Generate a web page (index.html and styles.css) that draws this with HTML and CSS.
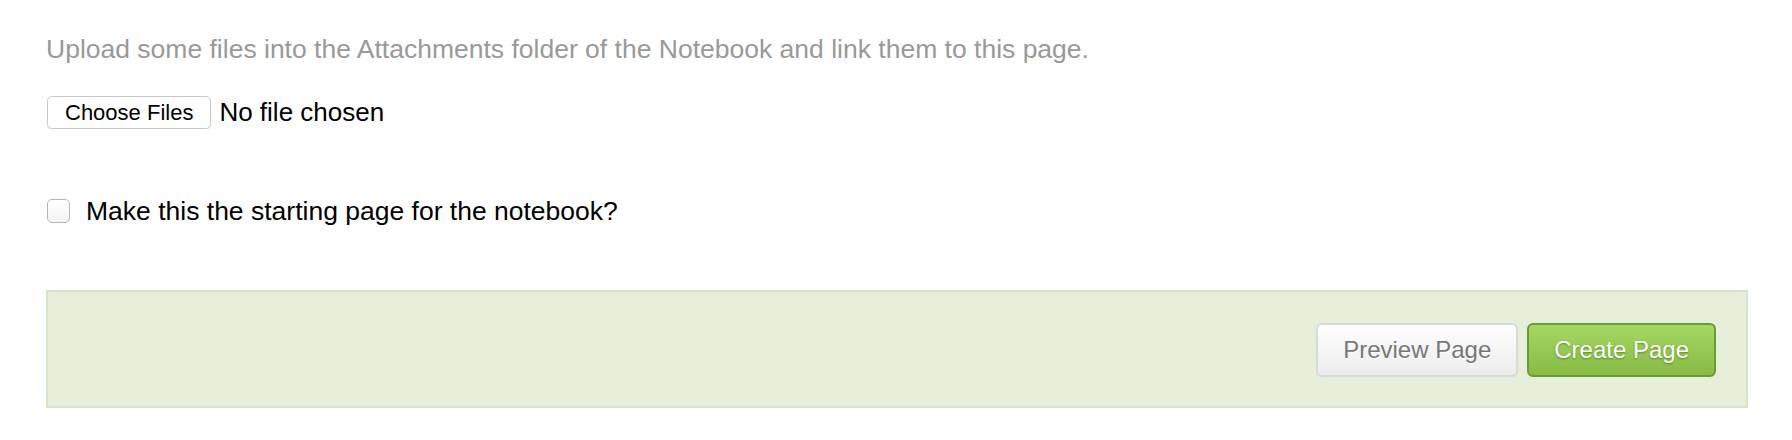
FILE: index.html
```html
<!DOCTYPE html>
<html lang="en">

<head>
    <meta charset="utf-8">
    <meta name="viewport" content="width=device-width, initial-scale=1.0">
    <title>New Page</title>
    <link rel="stylesheet" href="styles.css">
</head>

<body>
    <form class="nyside">
        <p class="hjelp">Upload some files into the Attachments folder of the Notebook and link them to this page.</p>

        <div class="filer">
            <input type="file" multiple>
        </div>

        <label class="startside">
            <input type="checkbox">
            <span>Make this the starting page for the notebook?</span>
        </label>

        <div class="knapper">
            <button type="button" class="knap forhaand">Preview Page</button>
            <button type="submit" class="knap opret">Create Page</button>
        </div>
    </form>
</body>

</html>
```

FILE: styles.css
```css
body {
    margin: 0;
    background-color: #fff;
    font-family: 'Liberation Sans', Arial, sans-serif;
    color: #000;
}

.nyside {
    padding: 31px 44px 0 46px;
}

.hjelp {
    margin: 0;
    font-size: 26.5px;
    line-height: 36px;
    color: #999;
}

.filer {
    margin-top: 29px;
    height: 33px;
}

.filer input {
    font-family: 'Liberation Sans', Arial, sans-serif;
    font-size: 26px;
    line-height: 33px;
    height: 33px;
    color: #000;
    padding: 0;
    margin: 0 0 0 1px;
}

.filer input::file-selector-button {
    font-family: 'Liberation Sans', Arial, sans-serif;
    font-size: 22px;
    height: 33px;
    padding: 0 17px;
    margin: 0 8px 0 0;
    background: #fff;
    border: 1px solid #c9c9c9;
    border-radius: 5px;
    color: #000;
    box-shadow: 0 1px 1px rgba(0, 0, 0, 0.08);
    vertical-align: top;
}

.startside {
    display: flex;
    align-items: center;
    gap: 16px;
    margin-top: 64px;
    font-size: 26.5px;
    line-height: 36px;
}

.startside input {
    appearance: none;
    width: 23px;
    height: 24px;
    margin: 0 0 0 1px;
    border: 1px solid #b5b5b5;
    border-radius: 5px;
    background: linear-gradient(#fff, #f4f4f4);
}

.knapper {
    display: flex;
    justify-content: flex-end;
    gap: 9px;
    margin-top: 61px;
    padding: 31px 30px 29px;
    background-color: #e5efd9;
    border: 2px solid #d6e4c8;
}

.knap {
    height: 54px;
    padding: 0 25px;
    border-radius: 6px;
    font-family: 'Liberation Sans', Arial, sans-serif;
    font-size: 24px;
}

.forhaand {
    color: #777;
    border: 2px solid #d9d9d9;
    background: linear-gradient(#fefefe, #ececec);
    text-shadow: 0 1px 0 #fff;
}

.opret {
    color: #fff;
    border: 2px solid #6c9a34;
    background: linear-gradient(#a5d862, #87bb45);
    text-shadow: 0 1px 2px rgba(50, 90, 10, 0.6);
}
```
